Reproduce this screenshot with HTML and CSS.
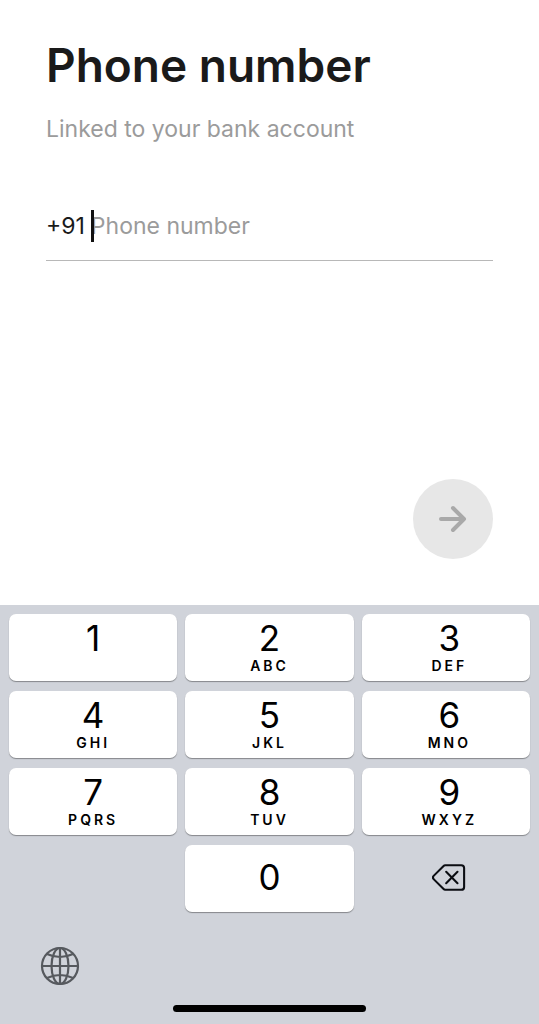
FILE: index.html
```html
<!DOCTYPE html>
<html lang="en">
<head>
    <meta charset="UTF-8">
    <meta name="viewport" content="width=device-width, initial-scale=1.0">
    <title>Phone number</title>
    <link rel="stylesheet" href="styles.css">
</head>
<body>

    <!-- Phone form -->
    <form class="phone-form">
        <h1><label for="phone">Phone number</label></h1>
        <p class="subtitle">Linked to your bank account</p>

        <div class="phone-field">
            <span class="country-code">+91</span>
            <div class="input-wrap">
                <input type="tel" id="phone" placeholder="Phone number">
                <span class="caret"></span>
            </div>
        </div>

        <button type="submit" class="next-btn" aria-label="Next">
            <svg width="28" height="28" viewBox="0 0 28 28" fill="none" stroke="#a9a9a9" stroke-width="4" stroke-linecap="round" stroke-linejoin="round">
                <path d="M2 14H25M14 3L25 14L14 25"/>
            </svg>
        </button>
    </form>

    <!-- Number pad -->
    <div class="keyboard">
        <div class="keys">
            <button class="key">1<small></small></button>
            <button class="key">2<small>ABC</small></button>
            <button class="key">3<small>DEF</small></button>
            <button class="key">4<small>GHI</small></button>
            <button class="key">5<small>JKL</small></button>
            <button class="key">6<small>MNO</small></button>
            <button class="key">7<small>PQRS</small></button>
            <button class="key">8<small>TUV</small></button>
            <button class="key">9<small>WXYZ</small></button>
            <button class="key key-zero">0</button>
            <button class="key key-delete" aria-label="Delete">
                <svg width="34" height="29" viewBox="0 0 36 30" fill="none" stroke="#0b0d12" stroke-width="2.2" stroke-linecap="round" stroke-linejoin="round">
                    <path d="M14 2H31Q34 2 34 5V25Q34 28 31 28H14Q13 28 12 27L2 17Q0 15 2 13L12 3Q13 2 14 2Z"/>
                    <path d="M15 9L27 21M27 9L15 21"/>
                </svg>
            </button>
        </div>

        <button class="globe-btn" aria-label="Next keyboard">
            <svg width="40" height="40" viewBox="0 0 40 40" fill="none" stroke="#56595e" stroke-width="2.2">
                <circle cx="20" cy="20" r="18"/>
                <ellipse cx="20" cy="20" rx="8.5" ry="18"/>
                <path d="M20 2V38M2 20H38M7 8Q20 14 33 8M7 32Q20 26 33 32"/>
            </svg>
        </button>

        <div class="home-bar"></div>
    </div>

</body>
</html>
```

FILE: styles.css
```css
* {
    box-sizing: border-box;
}

body {
    font-family: 'Inter', 'Roboto', sans-serif;
    background-color: #fff;
    color: #1a1a1a;
    margin: 0;
    min-height: 100vh;
    display: flex;
    flex-direction: column;
}

button {
    border: none;
    padding: 0;
    cursor: pointer;
}

svg {
    display: block;
}

.phone-form {
    flex: 1;
    display: flex;
    flex-direction: column;
    padding: 35px 46px 46px;
}

h1 {
    font-size: 46px;
    font-weight: 600;
    line-height: 60px;
    margin: 0 0 19px;
}

.subtitle {
    font-size: 23px;
    line-height: 30px;
    color: #9b9b9b;
    margin: 0 0 60px;
}

.phone-field {
    display: flex;
    align-items: center;
    gap: 6px;
    font-size: 23px;
    height: 57px;
    padding-bottom: 13px;
    border-bottom: 1px solid #b8b8b8;
}

.input-wrap {
    position: relative;
    flex: 1;
    display: flex;
}

.input-wrap input {
    width: 100%;
    height: 32px;
    padding: 0;
    border: none;
    outline: none;
    background: none;
    color: #1a1a1a;
    font: inherit;
}

.input-wrap input::placeholder {
    color: #9b9b9b;
    opacity: 1;
}

.caret {
    position: absolute;
    left: 0;
    top: 0;
    width: 3px;
    height: 32px;
    background-color: #111;
}

.next-btn {
    display: flex;
    align-items: center;
    justify-content: center;
    width: 80px;
    height: 80px;
    margin-top: auto;
    align-self: flex-end;
    border-radius: 50%;
    background-color: #e7e7e7;
}

.keyboard {
    display: flex;
    flex-direction: column;
    background-color: #d0d3da;
    padding: 9px 9px 12px;
}

.keys {
    display: grid;
    grid-template-columns: repeat(3, 1fr);
    grid-auto-rows: 67px;
    gap: 10px 8px;
}

.key {
    display: flex;
    flex-direction: column;
    align-items: center;
    justify-content: center;
    padding-bottom: 3px;
    border-radius: 7px;
    background-color: #fff;
    box-shadow: 0 1px 1px #85878b;
    color: #000;
    font-family: inherit;
    font-size: 35px;
    line-height: 40px;
}

/* right column sits slightly off centre */
.key:nth-child(3n),
.key-delete {
    padding-left: 7px;
}

.key small {
    font-size: 14px;
    font-weight: 600;
    line-height: 16px;
    height: 16px;
    letter-spacing: 3px;
}

.key-zero {
    grid-column: 2;
}

.key-delete {
    background: none;
    box-shadow: none;
}

.globe-btn {
    align-self: flex-start;
    margin: 34px 0 0 31px;
    background: none;
}

.home-bar {
    align-self: center;
    width: 37%;
    height: 7px;
    margin-top: 19px;
    border-radius: 4px;
    background-color: #000;
}
```
